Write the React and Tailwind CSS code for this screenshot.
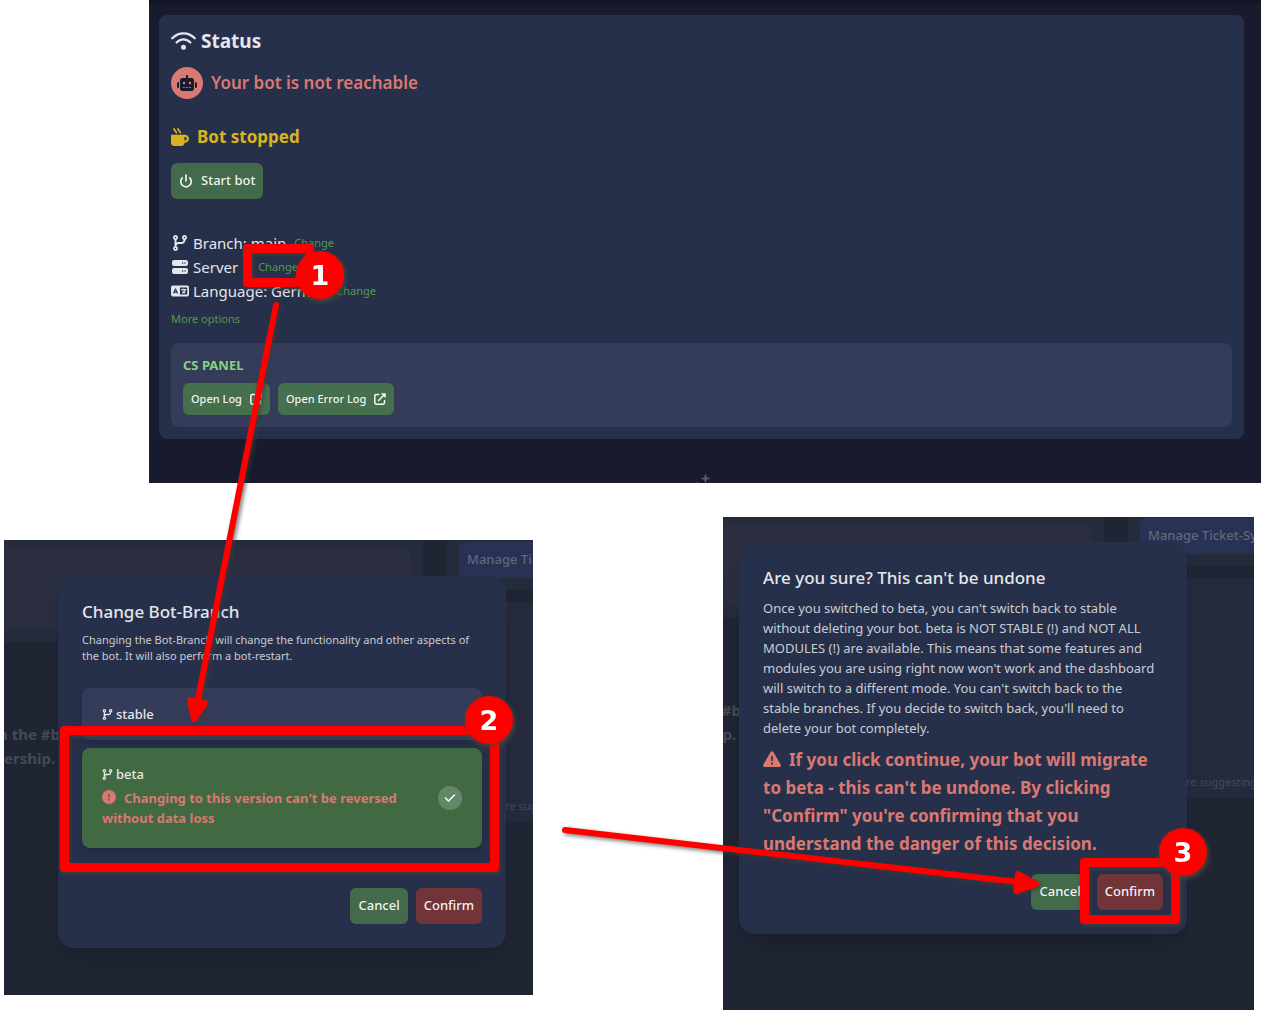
import React from "react";
import {
  FaCheck,
  FaCircleExclamation,
  FaCodeBranch,
  FaLanguage,
  FaMugHot,
  FaRobot,
  FaServer,
  FaTriangleExclamation,
} from "react-icons/fa6";
import { Power } from "lucide-react";

function WifiIcon() {
  return (
    <svg viewBox="0 0 25 18" className="h-[18px] w-[25px]" fill="none" stroke="currentColor" strokeWidth="2.2" strokeLinecap="round" aria-hidden="true">
      <path d="M1.2 6.3C7.4-.4 17.6-.4 23.8 6.3" />
      <path d="M5.600 10.500c3.900-4.300 9.900-4.300 13.800 0" />
      <circle cx="12.5" cy="15.2" r="2.5" fill="currentColor" stroke="none" />
    </svg>
  );
}

function OpenIcon() {
  return (
    <svg viewBox="0 0 12 12" className="size-3" fill="none" stroke="currentColor" strokeWidth="1.5" strokeLinecap="round" strokeLinejoin="round" aria-hidden="true">
      <path d="M4.700 1.500H2.200A1.300 1.300 0 0 0 .8 2.800v7a1.400 1.400 0 0 0 1.400 1.400h7a1.400 1.400 0 0 0 1.300-1.400V7.400" />
      <path d="M4.500 7.500l6-6" />
      <path d="M7.800.7h3.500v3.500z" fill="currentColor" strokeWidth="0.8" />
    </svg>
  );
}

function Button({ className, children }) {
  return (
    <button type="button" className={"flex items-center rounded-md px-2 font-medium text-white/95 " + className}>
      {children}
    </button>
  );
}

function InfoRow({ icon, label, linkClass }) {
  return (
    <li className="flex items-center gap-1 text-[15px] leading-6">
      <span className="flex w-[18px] justify-center">{icon}</span>
      <span>{label}</span>
      <a href="#change" className={"text-[11px] text-[#539a4c] " + linkClass}>Change</a>
    </li>
  );
}

function StatusPanel() {
  return (
    <section className="relative ml-[149px] h-[483px] overflow-hidden border-t-[3px] border-[#111722] bg-[#171b2d] pt-3 pr-[17px] pl-[10px]">
      <div className="rounded-lg bg-[#27304a] p-3 text-[#e4e6ec]">
        <h2 className="flex h-7 items-center gap-[5px] text-[19px] font-bold">
          <WifiIcon />
          Status
        </h2>
        <div className="mt-3 flex items-center gap-2 text-[#da7872]">
          <span className="flex size-8 items-center justify-center rounded-full bg-[#da7872]">
            <FaRobot className="size-5 text-[#171b2d]" />
          </span>
          <p className="text-[17px] leading-7 font-semibold">Your bot is not reachable</p>
        </div>
        <p className="mt-6 flex items-center gap-2 text-[17px] leading-7 font-bold text-[#dab420]">
          <FaMugHot className="size-[18px]" />
          Bot stopped
        </p>
        <Button className="mt-3 h-9 gap-2 bg-[#436a4a] text-[13px]">
          <Power size={14} strokeWidth={2.8} />
          Start bot
        </Button>
        <ul className="mt-8">
          <InfoRow icon={<FaCodeBranch className="size-4" />} label="Branch: main" linkClass="ml-1" />
          <InfoRow icon={<FaServer className="size-4" />} label="Server" linkClass="ml-4" />
          <InfoRow icon={<FaLanguage className="size-[18px]" />} label="Language: German" linkClass="ml-1" />
        </ul>
        <a href="#more" className="mt-2 block w-fit text-[11px] leading-4 text-[#539a4c]">More options</a>
        <div className="mt-4 rounded-lg bg-[#343c59] p-3">
          <h3 className="text-[13px] leading-5 font-bold text-[#86d37d]">CS PANEL</h3>
          <div className="mt-2 flex gap-2">
            <Button className="h-8 gap-2 bg-[#466f4e] text-[11px]">
              Open Log
              <OpenIcon />
            </Button>
            <Button className="h-8 gap-2 bg-[#466f4e] text-[11px]">
              Open Error Log
              <OpenIcon />
            </Button>
          </div>
        </div>
      </div>
      <svg viewBox="0 0 16 10" className="absolute bottom-0 left-[547px] h-[10px] w-4" fill="#555a6b" aria-hidden="true">
        <path d="M9.500.5l1.400 3.700 3.600 1.300-3.600 1.300L9.500 10.500 8.100 6.800 4.500 5.500l3.600-1.300z" />
        <path d="M1.500 8l.8 2H.7z" />
      </svg>
    </section>
  );
}

function DimmedPage({ className }) {
  return (
    <div className={"absolute flex gap-6 text-[#454a57] " + className} aria-hidden="true">
      <div className="w-[419px] shrink-0">
        <div className="h-[102px] bg-[#242b3b] pt-[6px] pr-3">
          <div className="h-[84px] rounded-tr-lg bg-[#2a2e3f]" />
        </div>
        <p className="-ml-[6px] pt-20 text-[15px] leading-6 font-bold whitespace-nowrap">
          n the #b
          <br />
          <span className="ml-[6px]">ership.</span>
        </p>
      </div>
      <div className="grow">
        <div className="h-[50px] bg-[#242b3b] pt-[2px] pl-3">
          <div className="flex h-9 items-center rounded-md bg-[#273255] px-2 text-[13px] font-medium whitespace-nowrap text-[#636775]">
            Manage Ticket-System
          </div>
        </div>
        <div className="mt-3 flex h-[220px] flex-col justify-end bg-[#252b3c] pb-2 pl-[58px] text-[11px] leading-4 whitespace-nowrap">
          re suggesting
        </div>
      </div>
    </div>
  );
}

function ModalActions({ className }) {
  return (
    <div className={"flex justify-end gap-2 " + className}>
      <Button className="h-9 bg-[#436a4a] text-[13px]">Cancel</Button>
      <Button className="h-9 bg-[#703439] text-[13px]">Confirm</Button>
    </div>
  );
}

function Option({ id, name, className, checked, children }) {
  return (
    <label htmlFor={id} className={"flex items-center justify-between rounded-lg px-5 py-4 shadow-md " + className}>
      <input id={id} type="radio" name="branch" defaultChecked={checked} className="sr-only" />
      <span className="block self-start">
        <span className="flex items-center gap-[3px] text-[13px] leading-5 font-medium text-[#e4e6ec]">
          <FaCodeBranch className="size-[11px]" />
          {name}
        </span>
        {children}
      </span>
      {checked && (
        <span className="flex size-6 shrink-0 items-center justify-center rounded-full bg-[#648768]">
          <FaCheck className="size-3 text-white" />
        </span>
      )}
    </label>
  );
}

function BranchDialog() {
  return (
    <section className="relative mt-[23px] h-[455px] w-[529px] overflow-hidden bg-[#1f2533] pt-9 pl-[54px]">
      <DimmedPage className="inset-0" />
      <div role="dialog" aria-labelledby="branch-title" className="relative w-[448px] rounded-2xl bg-[#27304a] p-6 shadow-xl">
        <h2 id="branch-title" className="text-[17px] leading-6 font-medium text-[#e4e6ec]">Change Bot-Branch</h2>
        <p className="mt-2 text-[11px] leading-4 text-[#c9ccd5]">
          Changing the Bot-Branch will change the functionality and other aspects of the bot. It will also perform a bot-restart.
        </p>
        <div className="mt-6 flex flex-col gap-2">
          <Option id="stable" name="stable" className="bg-[#343c59]" />
          <Option id="beta" name="beta" checked className="min-h-[100px] bg-[#426a42]">
            <span className="mt-1 block max-w-[310px] text-[13px] leading-5 font-bold text-[#da7872]">
              <FaCircleExclamation className="mr-2 mb-1 inline size-[14px]" />
              Changing to this version can't be reversed without data loss
            </span>
          </Option>
        </div>
        <ModalActions className="mt-10" />
      </div>
    </section>
  );
}

function ConfirmDialog() {
  return (
    <section className="relative h-[493px] w-[531px] overflow-hidden bg-[#1f2533] pt-[25px] pl-4">
      <DimmedPage className="-top-px right-0 -left-[38px]" />
      <div role="dialog" aria-labelledby="confirm-title" className="relative w-[448px] rounded-2xl bg-[#27304a] p-6 shadow-xl">
        <h2 id="confirm-title" className="text-[17px] leading-6 font-medium text-[#e4e6ec]">Are you sure? This can't be undone</h2>
        <p className="mt-2 max-w-[394px] text-[13px] leading-5 text-[#c9ccd5]">
          Once you switched to beta, you can't switch back to stable without deleting your bot. beta is NOT STABLE (!) and NOT ALL MODULES (!) are available. This means that some features and modules you are using right now won't work and the dashboard will switch to a different mode. You can't switch back to the stable branches. If you decide to switch back, you'll need to delete your bot completely.
        </p>
        <p className="mt-2 text-[17px] leading-7 font-bold text-[#da7872]">
          <FaTriangleExclamation className="mr-2 mb-1 inline size-[18px]" />
          If you click continue, your bot will migrate to beta - this can't be undone. By clicking "Confirm" you're confirming that you understand the danger of this decision.
        </p>
        <ModalActions className="mt-4" />
      </div>
    </section>
  );
}

function Marker({ className, badge, children }) {
  return (
    <div className={"absolute rounded-[4px] border-[9px] border-[#ff0000] drop-shadow-[1px_2px_2px_rgba(70,70,60,0.7)] " + className}>
      <span className={"absolute flex size-12 items-center justify-center rounded-full bg-[#ff0000] font-['DejaVu_Sans',sans-serif] text-[27px] leading-none font-bold text-white drop-shadow-[1px_2px_2px_rgba(70,70,60,0.7)] " + badge}>
        {children}
      </span>
    </div>
  );
}

function Annotations() {
  return (
    <div className="pointer-events-none absolute inset-0">
      <svg width="1261" height="1014" viewBox="0 0 1261 1014" className="absolute top-0 left-0 drop-shadow-[2px_2px_2px_rgba(60,60,60,0.7)]" fill="#ff0000" stroke="#ff0000" strokeLinecap="round" strokeLinejoin="round" aria-hidden="true">
        <path d="M276 305L197 704M565 830l453 52" strokeWidth="6" />
        <path d="M190 700l15 3-11 16zM1018 874l18 10-20 7z" strokeWidth="6" />
      </svg>
      <Marker className="top-[244px] left-[243px] h-[43px] w-[71px]" badge="-top-[2px] left-11">1</Marker>
      <Marker className="top-[726px] left-[60px] h-[146px] w-[439px]" badge="-top-[39px] left-[396px]">2</Marker>
      <Marker className="top-[858px] left-[1080px] h-[66px] w-[100px]" badge="-top-[39px] left-[70px]">3</Marker>
    </div>
  );
}

export default function App() {
  return (
    <main className="relative min-h-screen overflow-hidden bg-white font-['Noto_Sans',sans-serif]">
      <StatusPanel />
      <div className="mt-[34px] mb-1 flex items-start gap-[190px] pl-1">
        <div className="shrink-0"><BranchDialog /></div>
        <div className="shrink-0"><ConfirmDialog /></div>
      </div>
      <Annotations />
    </main>
  );
}
